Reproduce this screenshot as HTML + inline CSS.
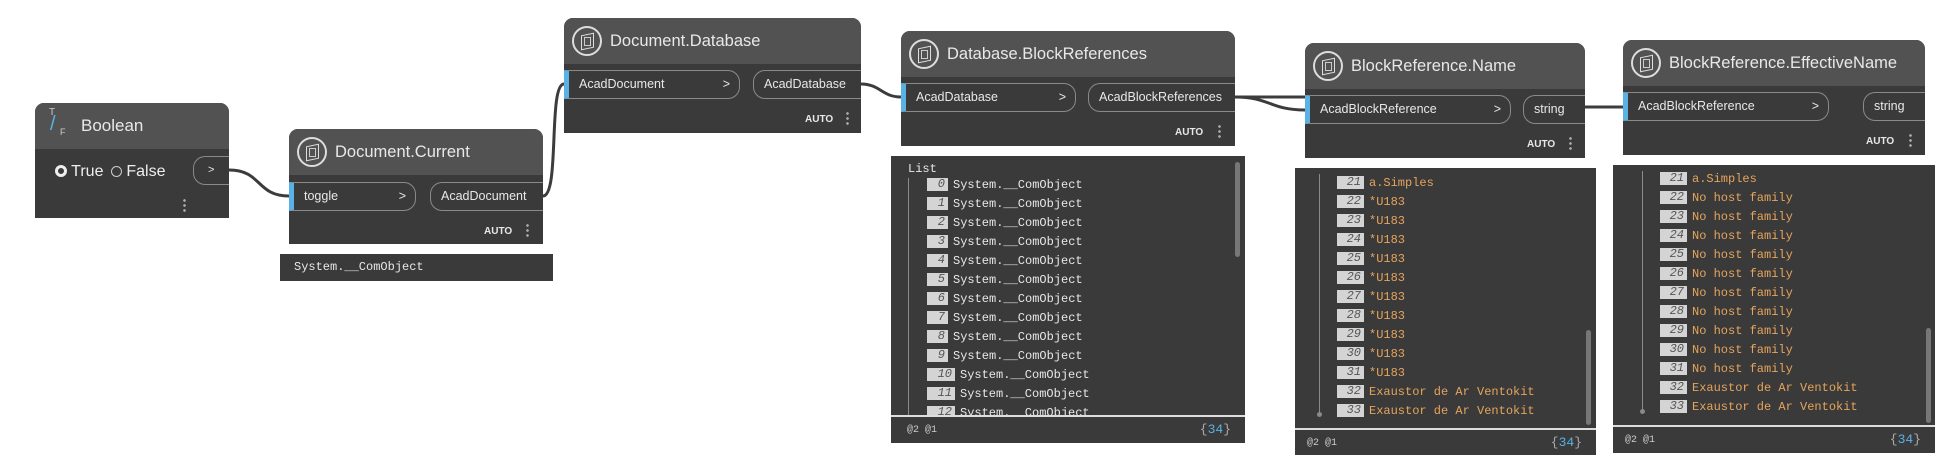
<!DOCTYPE html>
<html><head><meta charset="utf-8"><style>
*{box-sizing:border-box;margin:0;padding:0}
body{width:1960px;height:468px;background:#fff;position:relative;overflow:hidden;font-family:"Liberation Sans",sans-serif}
.n{position:absolute;background:#3a3a3a;border-radius:9px 9px 0 0;overflow:hidden}
.h{position:absolute;left:0;top:0;right:0;height:46px;background:#525252;color:#e8e8e8;font-size:16.5px;line-height:46px;padding-left:46px}
.ic{position:absolute;left:8px;top:8px;width:30px;height:30px;border:2px solid #ddd;border-radius:50%}
.ic:after{content:"";position:absolute;left:7px;top:6px;width:11px;height:13px;border:1.5px solid #ddd;transform:skewY(-12deg)}
.ic:before{content:"";position:absolute;left:10px;top:9px;width:5px;height:7px;border:1px solid #ccc}
.p{position:absolute;height:29px;border:1px solid #8a8a8a;border-radius:12px;color:#e8e8e8;font-size:12.5px;line-height:27px;padding-left:10px}
.in{border-left:5px solid #5ab1e4;border-radius:0 12px 12px 0}
.in .ar{position:absolute;right:9px;top:0}
.out{border-right:none;border-radius:12px 0 0 12px}
.auto{position:absolute;font-size:10px;font-weight:bold;color:#e8e8e8}
.dt{position:absolute;width:3px;height:15px;background:radial-gradient(circle,#aaa 1.2px,transparent 1.5px) 0 0/3px 5px repeat-y}
.pv{position:absolute;background:#3a3a3a;font-family:"Liberation Mono",monospace;font-size:12px;color:#e8e8e8}
.r{position:absolute;height:19px;line-height:19px;white-space:pre}
.ix{display:inline-block;background:#d4d4d4;color:#555;font-style:italic;text-align:right;padding-right:3px;height:13px;line-height:13px;vertical-align:1px;margin-right:5px}
.o{color:#e6a45c}
.ft{position:absolute;left:0;right:0;bottom:0;border-top:2px solid #ddd;font-size:10px;color:#ccc}
.sb{position:absolute;width:5px;background:#777;border-radius:3px}
.vl{position:absolute;width:1px;background:#8a8a8a}
</style></head><body>
<svg width="1960" height="468" style="position:absolute;left:0;top:0" fill="none" stroke="#3c3c3c" stroke-width="3">
<path d="M229 170 C262 170,256 196,289 196"/>
<path d="M543 196 C560 196,548 84,564 84"/>
<path d="M861 84 C880 84,882 97,901 97"/>
<path d="M1235 97 L1305 97"/>
<path d="M1235 97 C1270 97,1270 110,1305 110"/>
<path d="M1585 107 L1623 107"/>
</svg>

<!-- Boolean -->
<div class="n" style="left:35px;top:103px;width:194px;height:115px">
<div class="h" style="padding-left:46px;font-size:17px"><span style="position:absolute;left:14px;top:-13px;font-size:10px;color:#ccc">T</span><span style="position:absolute;left:15px;top:-2px;font-size:20px;color:#5ab1e4;">/</span><span style="position:absolute;left:25px;top:6px;font-size:9px;color:#ccc">F</span>Boolean</div>
<div style="position:absolute;left:20px;top:60px;color:#eee;font-size:16px"><span style="display:inline-block;width:12px;height:12px;border:3px solid #eee;border-radius:50%;vertical-align:-1px"></span> True <span style="display:inline-block;width:11px;height:11px;border:1px solid #ccc;border-radius:50%;vertical-align:-1px;margin-left:3px"></span> False</div>
<div class="p out" style="left:158px;top:53px;width:40px;height:29px;font-size:11px;padding-left:14px">&gt;</div>
<div class="dt" style="left:148px;top:95px"></div>
</div>

<!-- Document.Current -->
<div class="n" style="left:289px;top:129px;width:254px;height:115px">
<div class="h"><div class="ic"></div>Document.Current</div>
<div class="p in" style="left:0;top:53px;width:127px">toggle<span class="ar">&gt;</span></div>
<div class="p out" style="left:141px;top:53px;width:120px">AcadDocument</div>
<div class="auto" style="left:195px;top:97px">AUTO</div><div class="dt" style="left:237px;top:94px"></div>
</div>
<div class="pv" style="left:280px;top:254px;width:273px;height:27px"><div class="r" style="left:14px;top:4px">System.__ComObject</div></div>

<!-- Document.Database -->
<div class="n" style="left:564px;top:18px;width:297px;height:115px">
<div class="h"><div class="ic"></div>Document.Database</div>
<div class="p in" style="left:0;top:52px;width:176px">AcadDocument<span class="ar">&gt;</span></div>
<div class="p out" style="left:189px;top:52px;width:120px">AcadDatabase</div>
<div class="auto" style="left:241px;top:96px">AUTO</div><div class="dt" style="left:282px;top:93px"></div>
</div>

<!-- Database.BlockReferences -->
<div class="n" style="left:901px;top:31px;width:334px;height:115px">
<div class="h"><div class="ic"></div>Database.BlockReferences</div>
<div class="p in" style="left:0;top:52px;width:175px">AcadDatabase<span class="ar">&gt;</span></div>
<div class="p out" style="left:187px;top:52px;width:160px">AcadBlockReferences</div>
<div class="auto" style="left:274px;top:96px">AUTO</div><div class="dt" style="left:317px;top:93px"></div>
</div>
<div class="pv" style="left:891px;top:156px;width:354px;height:287px">
<div class="r" style="left:17px;top:4px">List</div>
<div class="vl" style="left:17px;top:22px;height:238px"></div>
<div class="sb" style="left:344px;top:6px;height:95px"></div>
<div style="position:absolute;left:0;top:0;right:0;height:259px;overflow:hidden">
<div class="r" style="left:36px;top:20px"><span class="ix" style="width:21px">0</span>System.__ComObject</div>
<div class="r" style="left:36px;top:39px"><span class="ix" style="width:21px">1</span>System.__ComObject</div>
<div class="r" style="left:36px;top:58px"><span class="ix" style="width:21px">2</span>System.__ComObject</div>
<div class="r" style="left:36px;top:77px"><span class="ix" style="width:21px">3</span>System.__ComObject</div>
<div class="r" style="left:36px;top:96px"><span class="ix" style="width:21px">4</span>System.__ComObject</div>
<div class="r" style="left:36px;top:115px"><span class="ix" style="width:21px">5</span>System.__ComObject</div>
<div class="r" style="left:36px;top:134px"><span class="ix" style="width:21px">6</span>System.__ComObject</div>
<div class="r" style="left:36px;top:153px"><span class="ix" style="width:21px">7</span>System.__ComObject</div>
<div class="r" style="left:36px;top:172px"><span class="ix" style="width:21px">8</span>System.__ComObject</div>
<div class="r" style="left:36px;top:191px"><span class="ix" style="width:21px">9</span>System.__ComObject</div>
<div class="r" style="left:36px;top:210px"><span class="ix" style="width:28px">10</span>System.__ComObject</div>
<div class="r" style="left:36px;top:229px"><span class="ix" style="width:28px">11</span>System.__ComObject</div>
<div class="r" style="left:36px;top:248px"><span class="ix" style="width:28px">12</span>System.__ComObject</div>
</div>
<div class="ft" style="height:28px"><span style="position:absolute;left:16px;top:8px">@2 @1</span><span style="position:absolute;right:14px;top:5px;font-size:13px;color:#aaa">{<span style="color:#5ab1e4">34</span>}</span></div>
</div>

<!-- BlockReference.Name -->
<div class="n" style="left:1305px;top:43px;width:280px;height:115px">
<div class="h"><div class="ic"></div>BlockReference.Name</div>
<div class="p in" style="left:0;top:52px;width:206px">AcadBlockReference<span class="ar">&gt;</span></div>
<div class="p out" style="left:218px;top:52px;width:70px">string</div>
<div class="auto" style="left:222px;top:96px">AUTO</div><div class="dt" style="left:264px;top:93px"></div>
</div>
<div class="pv" style="left:1295px;top:168px;width:301px;height:287px">
<div class="vl" style="left:24px;top:6px;height:240px"></div>
<div style="position:absolute;left:22px;top:244px;width:5px;height:5px;border-radius:50%;background:#8a8a8a"></div>
<div class="sb" style="left:291px;top:162px;height:95px"></div>
<div class="r" style="left:42px;top:6px"><span class="ix" style="width:27px">21</span><span class="o">a.Simples</span></div>
<div class="r" style="left:42px;top:25px"><span class="ix" style="width:27px">22</span><span class="o">*U183</span></div>
<div class="r" style="left:42px;top:44px"><span class="ix" style="width:27px">23</span><span class="o">*U183</span></div>
<div class="r" style="left:42px;top:63px"><span class="ix" style="width:27px">24</span><span class="o">*U183</span></div>
<div class="r" style="left:42px;top:82px"><span class="ix" style="width:27px">25</span><span class="o">*U183</span></div>
<div class="r" style="left:42px;top:101px"><span class="ix" style="width:27px">26</span><span class="o">*U183</span></div>
<div class="r" style="left:42px;top:120px"><span class="ix" style="width:27px">27</span><span class="o">*U183</span></div>
<div class="r" style="left:42px;top:139px"><span class="ix" style="width:27px">28</span><span class="o">*U183</span></div>
<div class="r" style="left:42px;top:158px"><span class="ix" style="width:27px">29</span><span class="o">*U183</span></div>
<div class="r" style="left:42px;top:177px"><span class="ix" style="width:27px">30</span><span class="o">*U183</span></div>
<div class="r" style="left:42px;top:196px"><span class="ix" style="width:27px">31</span><span class="o">*U183</span></div>
<div class="r" style="left:42px;top:215px"><span class="ix" style="width:27px">32</span><span class="o">Exaustor de Ar Ventokit</span></div>
<div class="r" style="left:42px;top:234px"><span class="ix" style="width:27px">33</span><span class="o">Exaustor de Ar Ventokit</span></div>
<div class="ft" style="height:27px"><span style="position:absolute;left:12px;top:8px">@2 @1</span><span style="position:absolute;right:14px;top:5px;font-size:13px;color:#aaa">{<span style="color:#5ab1e4">34</span>}</span></div>
</div>

<!-- BlockReference.EffectiveName -->
<div class="n" style="left:1623px;top:40px;width:302px;height:115px">
<div class="h"><div class="ic"></div>BlockReference.EffectiveName</div>
<div class="p in" style="left:0;top:52px;width:206px">AcadBlockReference<span class="ar">&gt;</span></div>
<div class="p out" style="left:240px;top:52px;width:70px">string</div>
<div class="auto" style="left:243px;top:96px">AUTO</div><div class="dt" style="left:286px;top:93px"></div>
</div>
<div class="pv" style="left:1613px;top:165px;width:322px;height:288px">
<div class="vl" style="left:29px;top:6px;height:240px"></div>
<div style="position:absolute;left:27px;top:244px;width:5px;height:5px;border-radius:50%;background:#8a8a8a"></div>
<div class="sb" style="left:313px;top:163px;height:95px"></div>
<div class="r" style="left:47px;top:5px"><span class="ix" style="width:27px">21</span><span class="o">a.Simples</span></div>
<div class="r" style="left:47px;top:24px"><span class="ix" style="width:27px">22</span><span class="o">No host family</span></div>
<div class="r" style="left:47px;top:43px"><span class="ix" style="width:27px">23</span><span class="o">No host family</span></div>
<div class="r" style="left:47px;top:62px"><span class="ix" style="width:27px">24</span><span class="o">No host family</span></div>
<div class="r" style="left:47px;top:81px"><span class="ix" style="width:27px">25</span><span class="o">No host family</span></div>
<div class="r" style="left:47px;top:100px"><span class="ix" style="width:27px">26</span><span class="o">No host family</span></div>
<div class="r" style="left:47px;top:119px"><span class="ix" style="width:27px">27</span><span class="o">No host family</span></div>
<div class="r" style="left:47px;top:138px"><span class="ix" style="width:27px">28</span><span class="o">No host family</span></div>
<div class="r" style="left:47px;top:157px"><span class="ix" style="width:27px">29</span><span class="o">No host family</span></div>
<div class="r" style="left:47px;top:176px"><span class="ix" style="width:27px">30</span><span class="o">No host family</span></div>
<div class="r" style="left:47px;top:195px"><span class="ix" style="width:27px">31</span><span class="o">No host family</span></div>
<div class="r" style="left:47px;top:214px"><span class="ix" style="width:27px">32</span><span class="o">Exaustor de Ar Ventokit</span></div>
<div class="r" style="left:47px;top:233px"><span class="ix" style="width:27px">33</span><span class="o">Exaustor de Ar Ventokit</span></div>
<div class="ft" style="height:28px"><span style="position:absolute;left:12px;top:8px">@2 @1</span><span style="position:absolute;right:14px;top:5px;font-size:13px;color:#aaa">{<span style="color:#5ab1e4">34</span>}</span></div>
</div>
</body></html>
